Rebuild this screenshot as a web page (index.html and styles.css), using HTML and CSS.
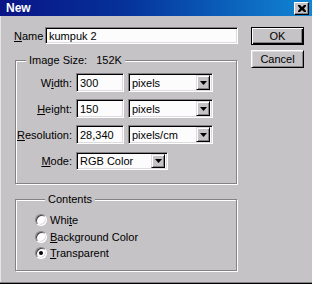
FILE: index.html
```html
<!DOCTYPE html>
<html>
<head>
<meta charset="utf-8">
<link rel="stylesheet" href="styles.css">
</head>
<body>
<div class="window">
  <div class="titlebar">
    <span class="title">New</span>
    <span class="close"><svg width="8" height="7" viewBox="0 0 8 7"><path d="M0 0h2l2 2 2-2h2v1L6 3.5 8 6v1H6L4 5 2 7H0V6l2-2.5L0 1z" fill="#000"/></svg></span>
  </div>
  <div class="content">
    <div class="main">
      <div class="name-row">
        <span class="lbl"><u>N</u>ame</span>
        <div class="field name-field">kumpuk 2</div>
      </div>
      <fieldset class="group size-group">
        <legend>Image Size:&nbsp;&nbsp;&nbsp;152K</legend>
        <div class="form-row">
          <span class="rlabel">W<u>i</u>dth:</span>
          <div class="field num">300</div>
          <div class="field select unit"><span>pixels</span><span class="arrow"><svg width="7" height="4" viewBox="0 0 7 4"><path d="M0 0h7L3.5 4z" fill="#000"/></svg></span></div>
        </div>
        <div class="form-row">
          <span class="rlabel"><u>H</u>eight:</span>
          <div class="field num">150</div>
          <div class="field select unit"><span>pixels</span><span class="arrow"><svg width="7" height="4" viewBox="0 0 7 4"><path d="M0 0h7L3.5 4z" fill="#000"/></svg></span></div>
        </div>
        <div class="form-row">
          <span class="rlabel"><u>R</u>esolution:</span>
          <div class="field num">28,340</div>
          <div class="field select unit"><span>pixels/cm</span><span class="arrow"><svg width="7" height="4" viewBox="0 0 7 4"><path d="M0 0h7L3.5 4z" fill="#000"/></svg></span></div>
        </div>
        <div class="form-row">
          <span class="rlabel"><u>M</u>ode:</span>
          <div class="field select mode"><span>RGB Color</span><span class="arrow"><svg width="7" height="4" viewBox="0 0 7 4"><path d="M0 0h7L3.5 4z" fill="#000"/></svg></span></div>
        </div>
      </fieldset>
      <fieldset class="group contents-group">
        <legend>Contents</legend>
        <div class="radio-row"><span class="radio"></span><span>Whi<u>t</u>e</span></div>
        <div class="radio-row"><span class="radio"></span><span><u>B</u>ackground Color</span></div>
        <div class="radio-row"><span class="radio checked"></span><span><u>T</u>ransparent</span></div>
      </fieldset>
    </div>
    <div class="buttons">
      <div class="btn default">OK</div>
      <div class="btn">Cancel</div>
    </div>
  </div>
</div>
</body>
</html>
```
FILE: styles.css
```css
* { box-sizing: border-box; }
html, body { margin: 0; padding: 0; }
body {
  font-family: "Liberation Sans", Arial, sans-serif;
  font-size: 11px;
  color: #000;
  background: #c6c3c6;
}
.window {
  width: 312px;
  height: 284px;
  background: #c6c3c6;
  border-bottom: 1px solid #000;
  box-shadow: inset 0 -1px 0 #848284, inset 1px 0 0 #e6e6e6;
  overflow: hidden;
}
.titlebar {
  height: 16px;
  background: linear-gradient(to right, #0a1486 0%, #05329a 40%, #0a5cb8 70%, #1286d2 100%);
  display: flex;
  align-items: center;
  justify-content: space-between;
  padding: 0 3px 0 6px;
}
.title {
  color: #fff;
  font-weight: bold;
  font-size: 12px;
  line-height: 16px;
}
.close {
  width: 15px;
  height: 13px;
  background: #c6c3c6;
  border: 1px solid;
  border-color: #fff #000 #000 #fff;
  box-shadow: inset -1px -1px 0 #848284;
  display: flex;
  align-items: center;
  justify-content: center;
}
.content {
  display: flex;
  padding: 11px 0 0 14px;
}
.main {
  width: 224px;
}
.name-row {
  display: flex;
  align-items: center;
  height: 17px;
}
.lbl {
  width: 31px;
}
.field {
  background: #fcfcfc;
  border: 1px solid;
  border-color: #848284 #fff #fff #848284;
  box-shadow: inset 1px 1px 0 #000, inset -1px -1px 0 #dedbde;
  padding-left: 3px;
  display: flex;
  align-items: center;
  white-space: nowrap;
}
.name-field {
  width: 193px;
  height: 17px;
}
.group {
  margin: 10px 0 0 1px;
  width: 222px;
  border: 1px solid #848284;
  box-shadow: inset 1px 1px 0 #fff, 1px 1px 0 #fff;
  padding: 0;
}
.group legend {
  margin-left: 10px;
  padding: 0 3px;
  line-height: 13px;
  background: #c6c3c6;
}
.size-group {
  padding: 6px 0 13px 0;
  display: flex;
  flex-direction: column;
  gap: 7px;
}
.form-row {
  display: flex;
  align-items: center;
  gap: 4px;
  height: 19px;
}
.rlabel {
  width: 56px;
  text-align: right;
}
.num {
  width: 48px;
  height: 19px;
}
.select {
  justify-content: space-between;
  padding-right: 2px;
}
.unit {
  width: 85px;
  height: 19px;
}
.mode {
  width: 92px;
  height: 18px;
}
.arrow {
  width: 14px;
  height: 15px;
  background: #c6c3c6;
  border: 1px solid;
  border-color: #dedbde #000 #000 #dedbde;
  box-shadow: inset 1px 1px 0 #fff, inset -1px -1px 0 #848284;
  display: flex;
  align-items: center;
  justify-content: center;
}
.mode .arrow { height: 14px; }
.contents-group {
  margin-top: 9px;
  padding: 6px 0 8px 19px;
}
.radio-row {
  display: flex;
  align-items: center;
  gap: 3px;
  height: 16.5px;
}
.radio {
  width: 12px;
  height: 12px;
  border-radius: 50%;
  background: #fff;
  border: 1px solid;
  border-color: #848284 #fff #fff #848284;
  box-shadow: inset 1px 1px 0 #404040, inset -1px -1px 0 #dedbde;
  position: relative;
}
.radio.checked::after {
  content: "";
  position: absolute;
  left: 3px;
  top: 3px;
  width: 4px;
  height: 4px;
  border-radius: 50%;
  background: #000;
}
.buttons {
  margin-left: 13px;
  display: flex;
  flex-direction: column;
  gap: 5px;
}
.btn {
  width: 53px;
  height: 18px;
  background: #c6c3c6;
  border: 1px solid;
  border-color: #fff #000 #000 #fff;
  box-shadow: inset 1px 1px 0 #dedbde, inset -1px -1px 0 #848284;
  display: flex;
  align-items: center;
  justify-content: center;
}
.btn.default {
  border: 1px solid #000;
  box-shadow: inset 1px 1px 0 #fff, inset -1px -1px 0 #000, inset -2px -2px 0 #848284;
}
```
